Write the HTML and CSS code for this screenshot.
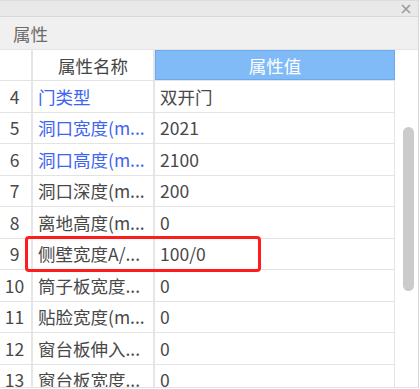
FILE: index.html
```html
<!DOCTYPE html>
<html lang="zh-CN">
<head>
  <meta charset="UTF-8" />
  <title>属性</title>
  <link rel="stylesheet" href="styles.css">
</head>
<body>
  <div class="panel">
    <div class="title-bar">
      <span class="close">
        <svg width="10" height="10" viewBox="0 0 10 10"><path d="M1 1 L9 9 M9 1 L1 9" stroke="#999" stroke-width="1.6"/></svg>
      </span>
    </div>
    <div class="section-head">属性</div>
    <div class="grid-wrap">
      <div class="grid">
        <div class="row head">
          <div class="cell idx"></div>
          <div class="cell name">属性名称</div>
          <div class="cell value">属性值</div>
        </div>
        <div class="row"><div class="cell idx">4</div><div class="cell name blue">门类型</div><div class="cell value">双开门</div></div>
        <div class="row"><div class="cell idx">5</div><div class="cell name blue">洞口宽度(m...</div><div class="cell value">2021</div></div>
        <div class="row"><div class="cell idx">6</div><div class="cell name blue">洞口高度(m...</div><div class="cell value">2100</div></div>
        <div class="row"><div class="cell idx">7</div><div class="cell name">洞口深度(m...</div><div class="cell value">200</div></div>
        <div class="row"><div class="cell idx">8</div><div class="cell name">离地高度(m...</div><div class="cell value">0</div></div>
        <div class="row"><div class="cell idx">9</div><div class="cell name">侧壁宽度A/...</div><div class="cell value">100/0</div></div>
        <div class="row"><div class="cell idx">10</div><div class="cell name">筒子板宽度...</div><div class="cell value">0</div></div>
        <div class="row"><div class="cell idx">11</div><div class="cell name">贴脸宽度(m...</div><div class="cell value">0</div></div>
        <div class="row"><div class="cell idx">12</div><div class="cell name">窗台板伸入...</div><div class="cell value">0</div></div>
        <div class="row"><div class="cell idx">13</div><div class="cell name">窗台板宽度...</div><div class="cell value">0</div></div>
      </div>
      <div class="scroll">
        <div class="thumb"></div>
      </div>
      <div class="highlight"></div>
    </div>
  </div>
</body>
</html>
```

FILE: styles.css
```css
body {
  margin: 0;
  font-family: "Noto Sans CJK SC", "Noto Sans", sans-serif;
  background: #ffffff;
  overflow: hidden;
}

.panel {
  width: 419px;
  height: 388px;
  border-right: 1px solid #d6d6d6;
  border-bottom: 1px solid #e2e2e2;
  box-sizing: border-box;
  overflow: hidden;
}

.title-bar {
  height: 17px;
  background: #e9e9e9;
  border-top: 1px solid #dcdcdc;
  border-bottom: 1px solid #d8d8d8;
  box-sizing: border-box;
  display: flex;
  justify-content: flex-end;
  align-items: center;
  padding-right: 7px;
}

.close {
  display: flex;
}

.section-head {
  height: 33px;
  background: #f0f0f0;
  color: #6b6b6b;
  font-size: 17.5px;
  padding-left: 13px;
  display: flex;
  align-items: center;
  border-bottom: 1px solid #e4e4e4;
  box-sizing: border-box;
}

.grid-wrap {
  position: relative;
  display: flex;
}

.grid {
  width: 395px;
}

.row {
  display: grid;
  grid-template-columns: 33px 122px 240px;
  height: 31.5px;
  border-bottom: 1px solid #e3e3e3;
  box-sizing: border-box;
}

.row.head {
  height: 31px;
}

.cell {
  display: flex;
  align-items: center;
  font-size: 17.5px;
  color: #484848;
  white-space: nowrap;
  overflow: hidden;
  border-right: 2px solid #e6e6e6;
  box-sizing: border-box;
}

.cell.idx {
  justify-content: center;
  padding-right: 2px;
}

.cell.name {
  padding-left: 5px;
}

.cell.value {
  padding-left: 5px;
  border-right: 1px solid #e3e3e3;
}

.cell.blue {
  color: #3e64f2;
}

.head .cell.name {
  justify-content: center;
  padding-left: 0;
  color: #444;
}

.head .cell.value {
  background: #80bbf8;
  border: 1px solid #6ba9f0;
  color: #ffffff;
  justify-content: center;
  padding-left: 0;
}

.scroll {
  width: 23px;
  position: relative;
}

.thumb {
  position: absolute;
  left: 8px;
  top: 77px;
  width: 11px;
  height: 164px;
  border-radius: 6px;
  background: #cbcbcb;
}

.highlight {
  position: absolute;
  left: 25px;
  top: 186px;
  width: 236px;
  height: 36px;
  border: 3.5px solid #ff1c1c;
  border-radius: 4px;
  box-sizing: border-box;
}
```
